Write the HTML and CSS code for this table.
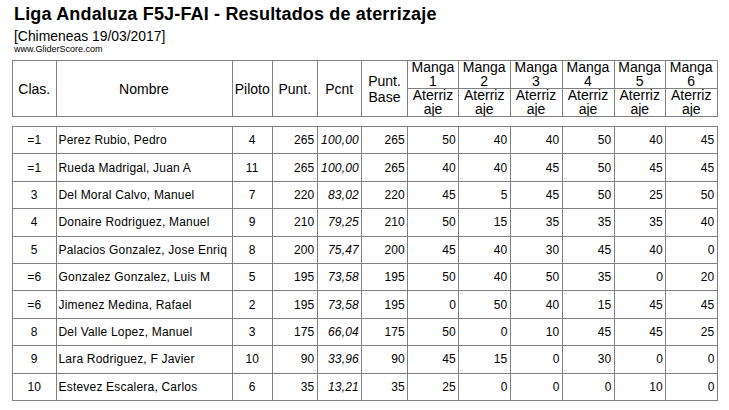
FILE: index.html
```html
<!DOCTYPE html>
<html lang="es">
<head>
<meta charset="utf-8">
<title>Liga Andaluza F5J-FAI - Resultados de aterrizaje</title>
<link rel="stylesheet" href="styles.css">
</head>
<body>
<div class="page">
  <div class="title">Liga Andaluza F5J-FAI - Resultados de aterrizaje</div>
  <div class="subtitle">[Chimeneas 19/03/2017]</div>
  <div class="site">www.GliderScore.com</div>

  <table class="grid head">
    <colgroup>
      <col class="w-clas"><col class="w-name"><col class="w-pil"><col class="w-punt"><col class="w-pcnt"><col class="w-base">
      <col class="w-m1"><col class="w-m2"><col class="w-m3"><col class="w-m4"><col class="w-m5"><col class="w-m6">
    </colgroup>
    <tr class="hr1">
      <th rowspan="2">Clas.</th>
      <th rowspan="2">Nombre</th>
      <th rowspan="2">Piloto</th>
      <th rowspan="2">Punt.</th>
      <th rowspan="2">Pcnt</th>
      <th rowspan="2" class="base">Punt.<br>Base</th>
      <th class="m">Manga 1</th>
      <th class="m">Manga 2</th>
      <th class="m">Manga 3</th>
      <th class="m">Manga 4</th>
      <th class="m">Manga 5</th>
      <th class="m">Manga 6</th>
    </tr>
    <tr class="hr2">
      <th class="m brk">Aterrizaje</th>
      <th class="m brk">Aterrizaje</th>
      <th class="m brk">Aterrizaje</th>
      <th class="m brk">Aterrizaje</th>
      <th class="m brk">Aterrizaje</th>
      <th class="m brk">Aterrizaje</th>
    </tr>
  </table>

  <table class="grid body">
    <colgroup>
      <col class="w-clas"><col class="w-name"><col class="w-pil"><col class="w-punt"><col class="w-pcnt"><col class="w-base">
      <col class="w-m1"><col class="w-m2"><col class="w-m3"><col class="w-m4"><col class="w-m5"><col class="w-m6">
    </colgroup>
    <tr><td class="c">=1</td><td class="l">Perez Rubio, Pedro</td><td class="c">4</td><td class="r">265</td><td class="r i">100,00</td><td class="r">265</td><td class="r">50</td><td class="r">40</td><td class="r">40</td><td class="r">50</td><td class="r">40</td><td class="r">45</td></tr>
    <tr><td class="c">=1</td><td class="l">Rueda Madrigal, Juan A</td><td class="c">11</td><td class="r">265</td><td class="r i">100,00</td><td class="r">265</td><td class="r">40</td><td class="r">40</td><td class="r">45</td><td class="r">50</td><td class="r">45</td><td class="r">45</td></tr>
    <tr><td class="c">3</td><td class="l">Del Moral Calvo, Manuel</td><td class="c">7</td><td class="r">220</td><td class="r i">83,02</td><td class="r">220</td><td class="r">45</td><td class="r">5</td><td class="r">45</td><td class="r">50</td><td class="r">25</td><td class="r">50</td></tr>
    <tr><td class="c">4</td><td class="l">Donaire Rodriguez, Manuel</td><td class="c">9</td><td class="r">210</td><td class="r i">79,25</td><td class="r">210</td><td class="r">50</td><td class="r">15</td><td class="r">35</td><td class="r">35</td><td class="r">35</td><td class="r">40</td></tr>
    <tr><td class="c">5</td><td class="l">Palacios Gonzalez, Jose Enriq</td><td class="c">8</td><td class="r">200</td><td class="r i">75,47</td><td class="r">200</td><td class="r">45</td><td class="r">40</td><td class="r">30</td><td class="r">45</td><td class="r">40</td><td class="r">0</td></tr>
    <tr><td class="c">=6</td><td class="l">Gonzalez Gonzalez, Luis M</td><td class="c">5</td><td class="r">195</td><td class="r i">73,58</td><td class="r">195</td><td class="r">50</td><td class="r">40</td><td class="r">50</td><td class="r">35</td><td class="r">0</td><td class="r">20</td></tr>
    <tr><td class="c">=6</td><td class="l">Jimenez Medina, Rafael</td><td class="c">2</td><td class="r">195</td><td class="r i">73,58</td><td class="r">195</td><td class="r">0</td><td class="r">50</td><td class="r">40</td><td class="r">15</td><td class="r">45</td><td class="r">45</td></tr>
    <tr><td class="c">8</td><td class="l">Del Valle Lopez, Manuel</td><td class="c">3</td><td class="r">175</td><td class="r i">66,04</td><td class="r">175</td><td class="r">50</td><td class="r">0</td><td class="r">10</td><td class="r">45</td><td class="r">45</td><td class="r">25</td></tr>
    <tr><td class="c">9</td><td class="l">Lara Rodriguez, F Javier</td><td class="c">10</td><td class="r">90</td><td class="r i">33,96</td><td class="r">90</td><td class="r">45</td><td class="r">15</td><td class="r">0</td><td class="r">30</td><td class="r">0</td><td class="r">0</td></tr>
    <tr><td class="c">10</td><td class="l">Estevez Escalera, Carlos</td><td class="c">6</td><td class="r">35</td><td class="r i">13,21</td><td class="r">35</td><td class="r">25</td><td class="r">0</td><td class="r">0</td><td class="r">0</td><td class="r">10</td><td class="r">0</td></tr>
  </table>
</div>
</body>
</html>
```

FILE: styles.css
```css
html, body {
  margin: 0;
  padding: 0;
  background: #ffffff;
}

body {
  font-family: "Liberation Sans", Arial, sans-serif;
  color: #000000;
}

.page {
  padding: 4px 0 0 12px;
}

.title {
  font-size: 18px;
  font-weight: bold;
  line-height: 21px;
  letter-spacing: 0.17px;
  padding-left: 2px;
}

.subtitle {
  font-size: 13.9px;
  line-height: 16px;
  margin-top: 3px;
  padding-left: 2px;
}

.site {
  font-size: 9px;
  line-height: 11px;
  padding-left: 2px;
}

.grid {
  border-collapse: collapse;
  table-layout: fixed;
  width: 705px;
}

.grid th,
.grid td {
  border: 1px solid #808080;
  padding: 0 2px;
  overflow: hidden;
}

.head {
  margin-top: 5px;
}

.head th {
  font-size: 14px;
  font-weight: normal;
  text-align: center;
  vertical-align: middle;
  line-height: 16px;
}

.head .m {
  line-height: 13.5px;
  padding: 0 1px;
}

.head .brk {
  word-break: break-all;
  padding: 0 3px;
}

.hr1 th.m,
.hr2 th.m {
  height: 26px;
}

.body {
  margin-top: 9px;
}

.body td {
  font-size: 12px;
  height: 26.4px;
  line-height: 14px;
  letter-spacing: 0.2px;
  white-space: nowrap;
}

.c { text-align: center; }
.l { text-align: left; }
.r { text-align: right; }
.i { font-style: italic; }

.w-clas { width: 43.5px; }
.w-name { width: 176px; }
.w-pil  { width: 40.5px; }
.w-punt { width: 44.5px; }
.w-pcnt { width: 44.5px; }
.w-base { width: 46px; }
.w-m1   { width: 51px; }
.w-m2   { width: 51.5px; }
.w-m3   { width: 52px; }
.w-m4   { width: 52px; }
.w-m5   { width: 51.5px; }
.w-m6   { width: 51.5px; }
```
